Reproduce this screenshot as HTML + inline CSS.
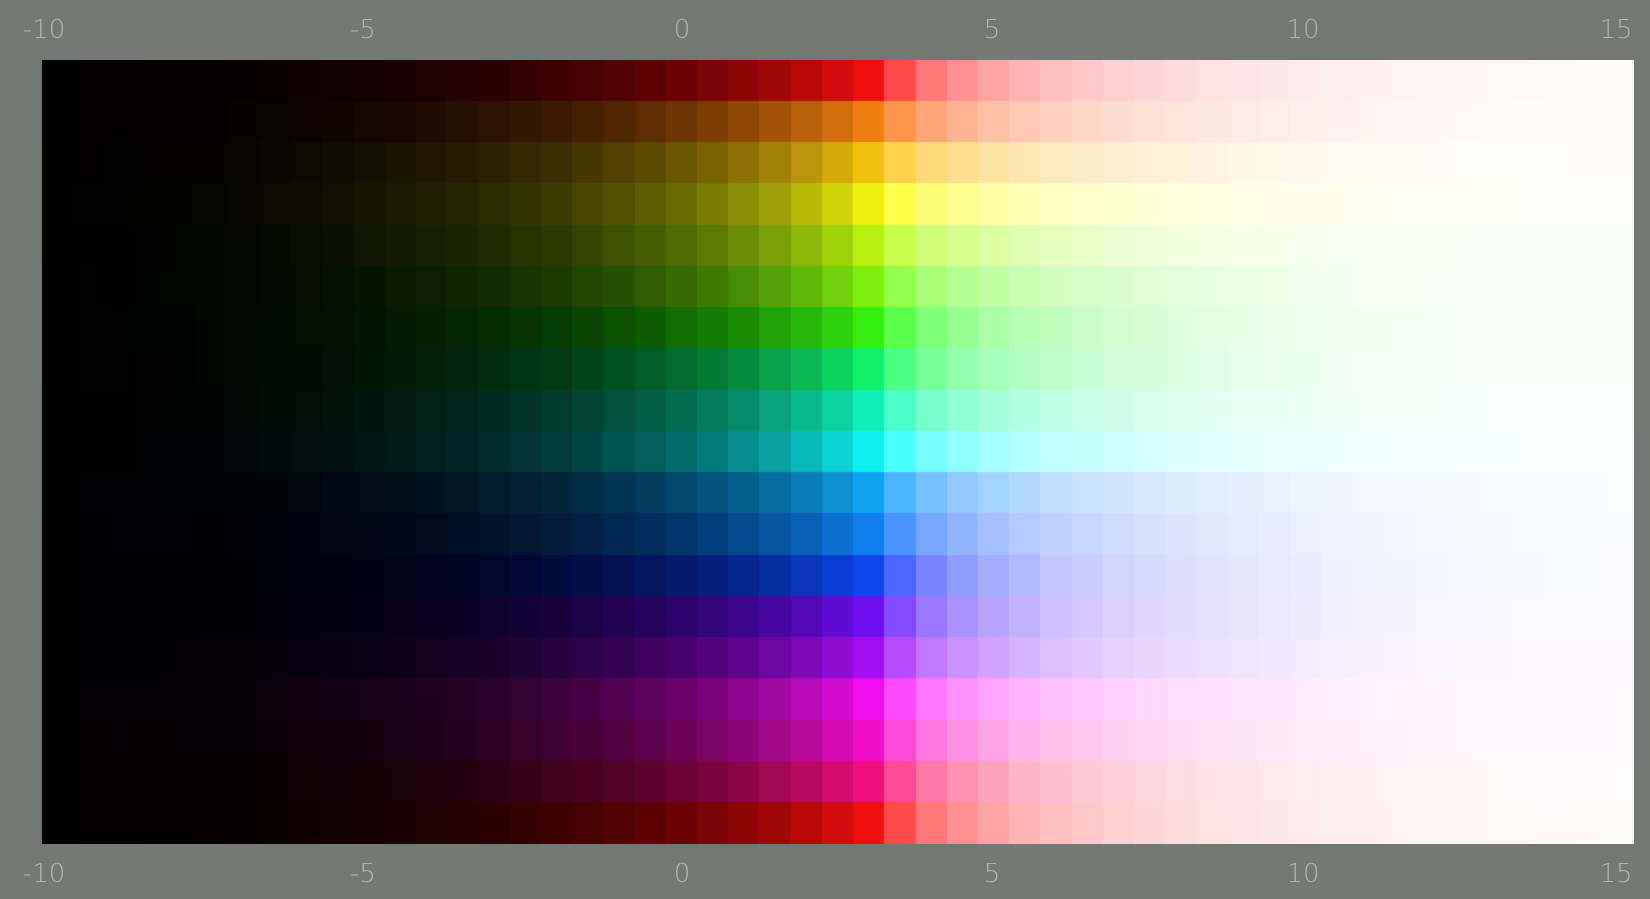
<!DOCTYPE html>
<html><head><meta charset="utf-8">
<style>
html,body{margin:0;padding:0;background:#747874;width:1650px;height:899px;overflow:hidden}
canvas{position:absolute;left:42px;top:60px}
.l{position:absolute;font-family:"DejaVu Sans","Liberation Sans",sans-serif;font-size:26px;color:#b4b8b4;transform:translateX(-50%);line-height:1;font-weight:300}
</style></head><body>
<canvas id="c" width="1592" height="784"></canvas>
<div id="labels"></div>
<script>
function hsl(h){h/=60;var x=1-Math.abs(h%2-1),r,g,b;
if(h<1){r=1;g=x;b=0}else if(h<2){r=x;g=1;b=0}else if(h<3){r=0;g=1;b=x}else if(h<4){r=0;g=x;b=1}else if(h<5){r=x;g=0;b=1}else{r=1;g=0;b=x}
var s=0.88;return[r,g,b].map(function(v){return 0.5+(v-0.5)*s})}
function toLin(v){return v<=0.04045?v/12.92:Math.pow((v+0.055)/1.055,2.4)}
function toS(v){v=Math.max(0,Math.min(1,v));return v<=0.0031308?v*12.92:1.055*Math.pow(v,1/2.4)-0.055}
var hues=[0,30,48,60,75,90,110,145,165,180,200,210,225,265,280,300,310,330,0];
var cv=document.getElementById('c'),ctx=cv.getContext('2d');
var W=1592/51,H=784/19;
for(var j=0;j<19;j++){var base=hsl(hues[j]).map(toLin);
var mx=Math.max.apply(null,base);base=base.map(function(v){return v/mx});
for(var i=0;i<51;i++){var x=-10+0.5*i,col;
if(x<=3.25){var L=Math.pow(2,(x-3.25)*0.85);col=base.map(function(v){return v*L});}
else{var f=Math.pow(2,-(x-3.25)*0.38);col=base.map(function(v){return 1-(1-v)*f})}
var s=col.map(function(v){return Math.round(toS(v)*255)});
ctx.fillStyle='rgb('+s.join(',')+')';
ctx.fillRect(Math.floor(i*W),Math.floor(j*H),Math.ceil(W)+1,Math.ceil(H)+1);}}
var lab=document.getElementById('labels'),h='';
var vals=[-10,-5,0,5,10,15],pos=[44,363,682,992,1303,1616];
for(var k=0;k<6;k++){var px=pos[k];
h+='<div class="l" style="left:'+px+'px;top:17px">'+vals[k]+'</div>';
h+='<div class="l" style="left:'+px+'px;top:861px">'+vals[k]+'</div>';}
lab.innerHTML=h;
</script>
</body></html>
